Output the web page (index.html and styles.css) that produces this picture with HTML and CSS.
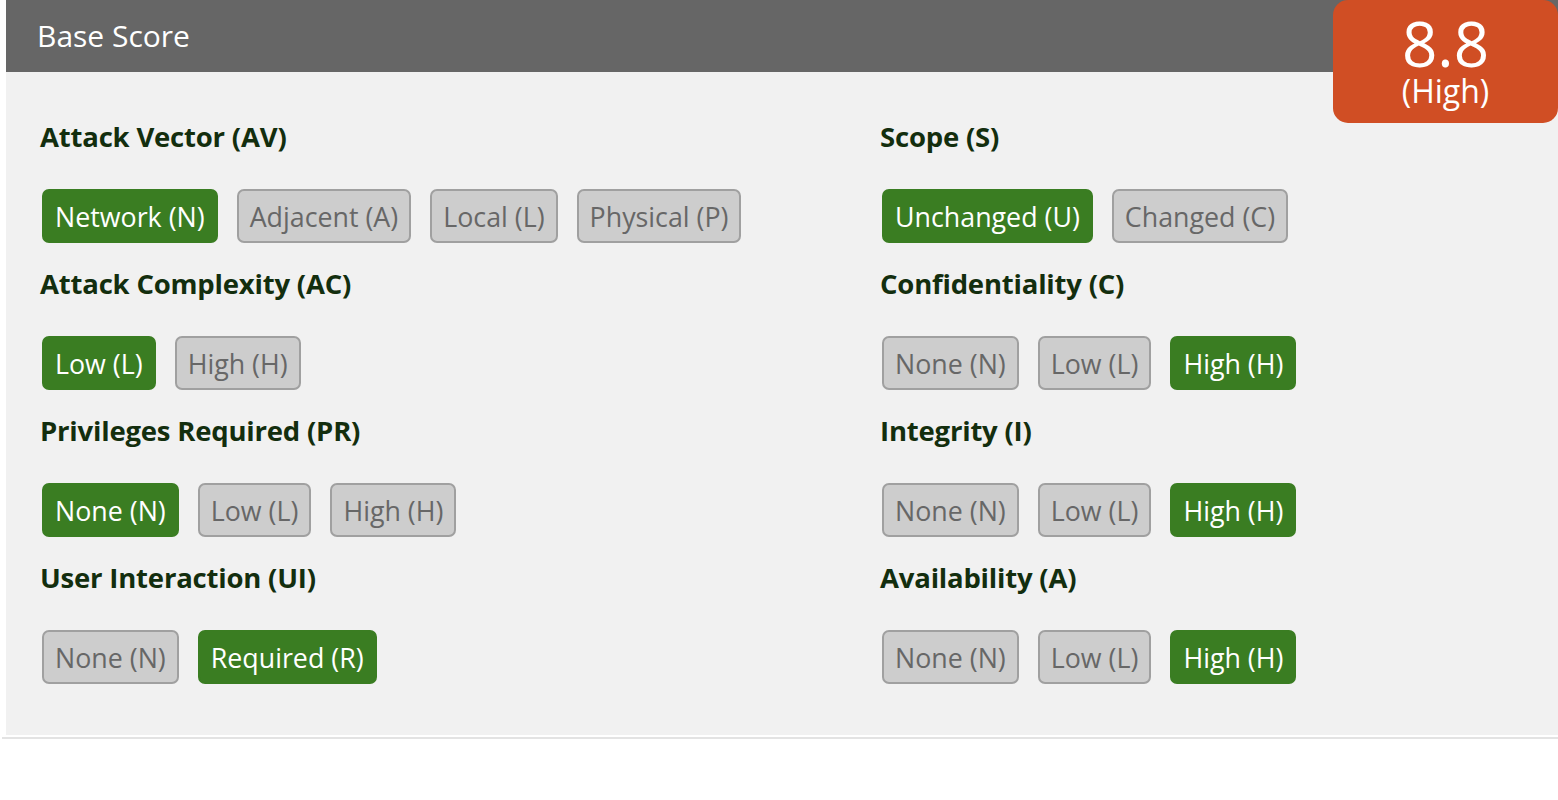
FILE: index.html
```html
<!DOCTYPE html>
<html lang="en">
<head>
  <meta charset="UTF-8" />
  <title>CVSS v3.1 Base Score</title>
  <link rel="stylesheet" href="styles.css">
</head>
<body>

<div class="panel">
  <div class="panel-head">Base Score</div>
  <div class="score">
    <span class="score-num">8.8</span>
    <span class="score-sev">(High)</span>
  </div>

  <div class="metrics">
    <div class="col">
      <div class="metric">
        <h3>Attack Vector (AV)</h3>
        <div class="opts">
          <button class="on">Network (N)</button>
          <button>Adjacent (A)</button>
          <button>Local (L)</button>
          <button>Physical (P)</button>
        </div>
      </div>
      <div class="metric">
        <h3>Attack Complexity (AC)</h3>
        <div class="opts">
          <button class="on">Low (L)</button>
          <button>High (H)</button>
        </div>
      </div>
      <div class="metric">
        <h3>Privileges Required (PR)</h3>
        <div class="opts">
          <button class="on">None (N)</button>
          <button>Low (L)</button>
          <button>High (H)</button>
        </div>
      </div>
      <div class="metric">
        <h3>User Interaction (UI)</h3>
        <div class="opts">
          <button>None (N)</button>
          <button class="on">Required (R)</button>
        </div>
      </div>
    </div>

    <div class="col">
      <div class="metric">
        <h3>Scope (S)</h3>
        <div class="opts">
          <button class="on">Unchanged (U)</button>
          <button>Changed (C)</button>
        </div>
      </div>
      <div class="metric">
        <h3>Confidentiality (C)</h3>
        <div class="opts">
          <button>None (N)</button>
          <button>Low (L)</button>
          <button class="on">High (H)</button>
        </div>
      </div>
      <div class="metric">
        <h3>Integrity (I)</h3>
        <div class="opts">
          <button>None (N)</button>
          <button>Low (L)</button>
          <button class="on">High (H)</button>
        </div>
      </div>
      <div class="metric">
        <h3>Availability (A)</h3>
        <div class="opts">
          <button>None (N)</button>
          <button>Low (L)</button>
          <button class="on">High (H)</button>
        </div>
      </div>
    </div>
  </div>
</div>
<div class="rule"></div>

</body>
</html>
```

FILE: styles.css
```css
body {
  margin: 0;
  background: #fff;
  font-family: "Open Sans", "Liberation Sans", sans-serif;
}
.panel {
  position: relative;
  margin-left: 6px;
  background: #f1f1f1;
}
.panel-head {
  height: 72px;
  line-height: 72px;
  padding-left: 31px;
  background: #666;
  color: #fff;
  font-size: 30px;
}
.score {
  position: absolute;
  top: 0;
  right: 0;
  width: 225px;
  height: 123px;
  box-sizing: border-box;
  padding-top: 15px;
  background: #d04e24;
  border-radius: 15px;
  color: #fff;
  display: flex;
  flex-direction: column;
  align-items: center;
}
.score-num {
  font-size: 62px;
  line-height: 56px;
}
.score-sev {
  font-size: 32px;
  line-height: 40px;
}
.metrics {
  display: grid;
  grid-template-columns: 840px 1fr;
  padding: 45px 0 30px 34px;
}
.metric {
  margin-bottom: 21px;
}
h3 {
  margin: 0 0 32px;
  height: 40px;
  line-height: 40px;
  font-size: 27.5px;
  font-weight: 700;
  color: #132e0e;
  letter-spacing: -0.2px;
}
.opts {
  display: flex;
  gap: 19px;
  margin-left: 2px;
}
button {
  height: 54px;
  padding: 0 11px;
  font-family: inherit;
  font-size: 26.8px;
  border: 2px solid #a0a0a0;
  border-radius: 7px;
  background: #cdcdcd;
  color: #676767;
}
button.on {
  background: #3a7d22;
  border-color: #3a7d22;
  color: #fff;
}
.rule {
  height: 2px;
  margin: 2px 0 0 2px;
  background: #e3e3e3;
}
```
